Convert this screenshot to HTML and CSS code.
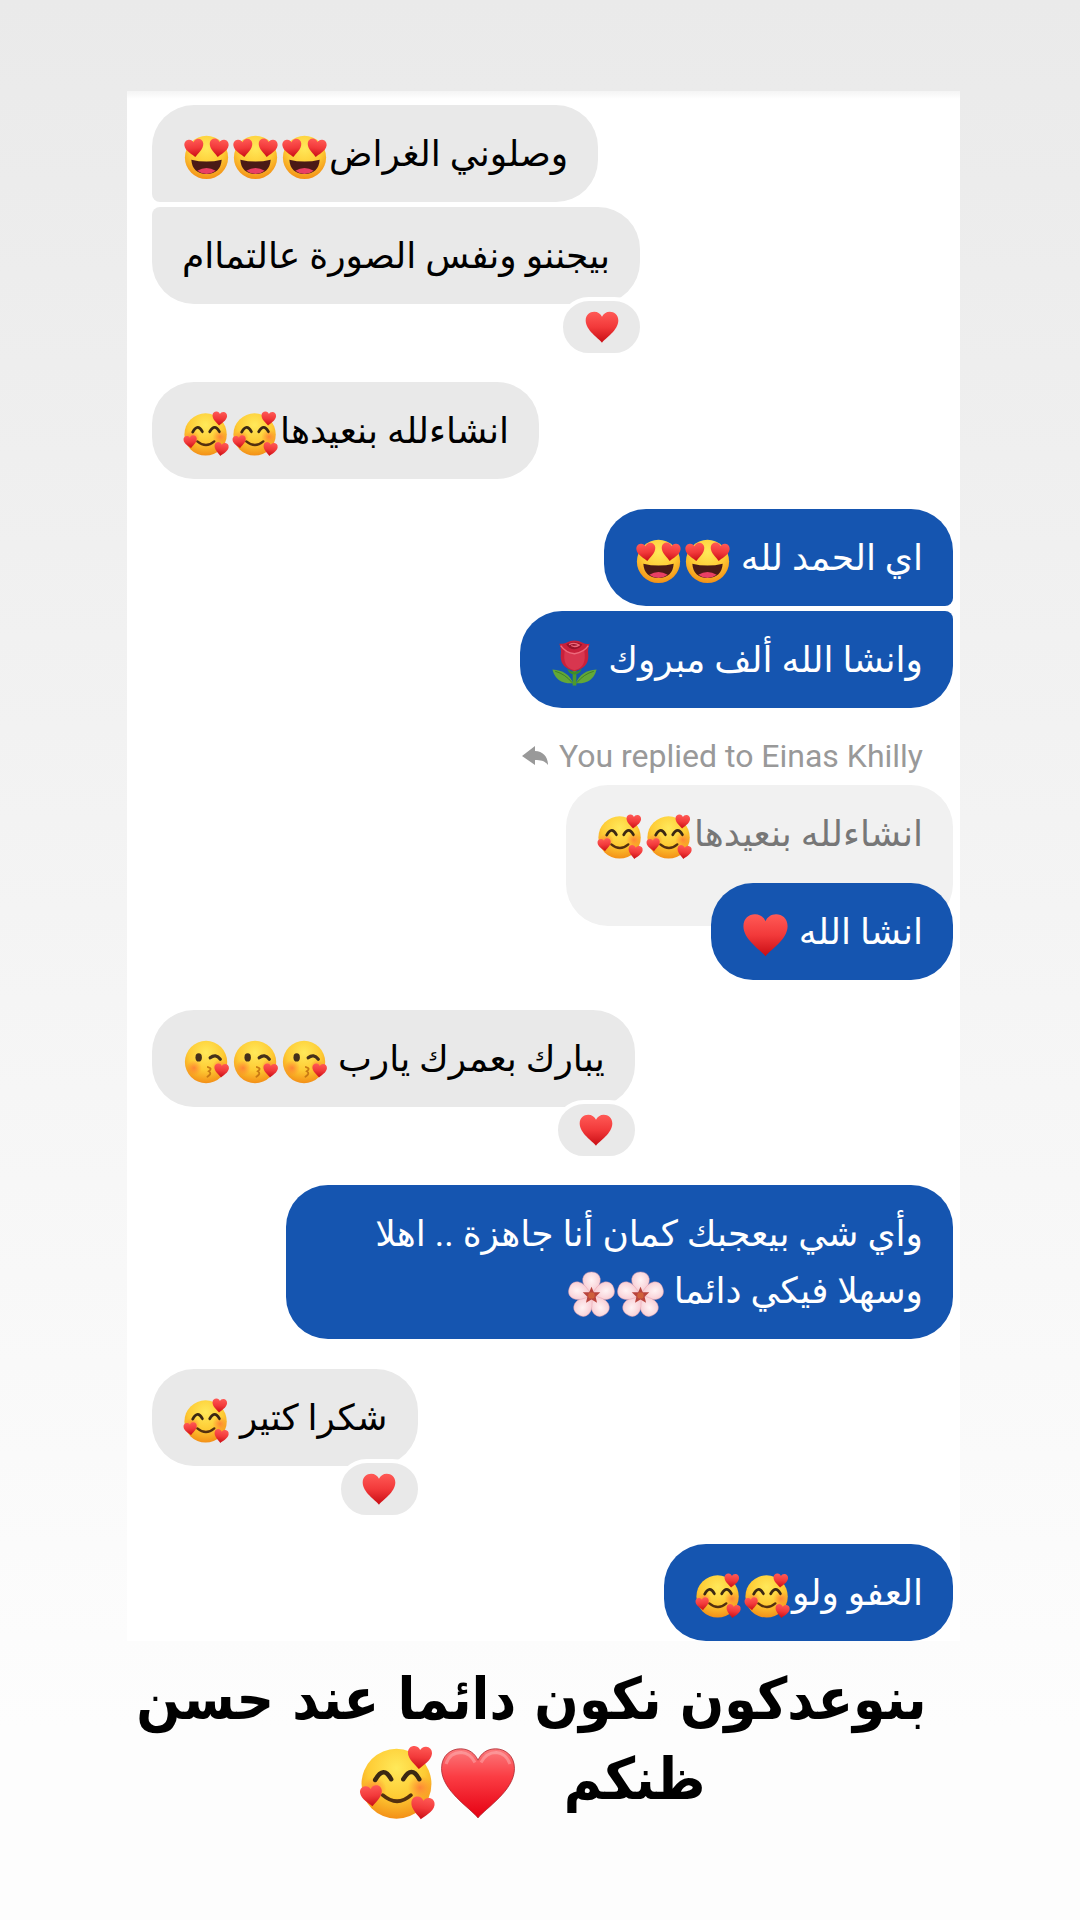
FILE: index.html
```html
<!DOCTYPE html>
<html lang="ar">
<head>
<meta charset="UTF-8">
<meta name="viewport" content="width=device-width, initial-scale=1.0">
<title>Chat story</title>
<link rel="stylesheet" href="styles.css">
</head>
<body>

<!-- shared emoji shapes -->
<svg class="defs" aria-hidden="true">
  <defs>
    <radialGradient id="face" cx="50%" cy="28%" r="75%">
      <stop offset="0" stop-color="#ffe95a"/>
      <stop offset="0.55" stop-color="#fecb34"/>
      <stop offset="1" stop-color="#f28a14"/>
    </radialGradient>
    <linearGradient id="red" x1="0" y1="0" x2="0" y2="1">
      <stop offset="0" stop-color="#ff5a56"/>
      <stop offset="0.5" stop-color="#f2393a"/>
      <stop offset="1" stop-color="#c90d14"/>
    </linearGradient>
    <linearGradient id="bigred" x1="0" y1="0" x2="0" y2="1">
      <stop offset="0" stop-color="#fb7a7c"/>
      <stop offset="0.4" stop-color="#fb3d44"/>
      <stop offset="1" stop-color="#e60012"/>
    </linearGradient>
    <radialGradient id="petal" cx="50%" cy="35%" r="65%">
      <stop offset="0" stop-color="#fff3f4"/>
      <stop offset="1" stop-color="#f6c3cb"/>
    </radialGradient>
    <radialGradient id="blush">
      <stop offset="0" stop-color="#ff6a3a" stop-opacity="0.7"/>
      <stop offset="1" stop-color="#ff7a2a" stop-opacity="0"/>
    </radialGradient>
    <path id="heartShape" d="M50 96C40 83 2 60 2 31C2 14 14 5 27 5C38 5 46 11 50 20C54 11 62 5 73 5C86 5 98 14 98 31C98 60 60 83 50 96Z"/>
    <symbol id="heart" viewBox="0 0 100 100">
      <use href="#heartShape" fill="url(#red)"/>
    </symbol>
    <symbol id="bigheart" viewBox="0 0 100 100">
      <use href="#heartShape" fill="url(#bigred)" stroke="#a8242b" stroke-width="1"/>
      <path d="M8 25Q13 10 28 10Q40 11 46 23M54 23Q61 10 74 10Q87 11 92 25" fill="none" stroke="#fff" stroke-opacity="0.25" stroke-width="4"/>
    </symbol>
    <symbol id="hearteyes" viewBox="0 0 100 100">
      <circle cx="50" cy="51" r="47" fill="url(#face)"/>
      <path d="M17 56Q50 64 83 56Q81 86 50 87Q19 86 17 56Z" fill="#4a1a16"/>
      <path d="M30 80Q50 68 70 80Q61 87 50 87Q39 87 30 80Z" fill="#e93f64"/>
      <use href="#heartShape" fill="url(#red)" transform="translate(2 9) rotate(-7 22 22) scale(.43)"/>
      <use href="#heartShape" fill="url(#red)" transform="translate(55 9) rotate(7 22 22) scale(.43)"/>
    </symbol>
    <symbol id="adore" viewBox="0 0 100 100">
      <circle cx="48" cy="51" r="46" fill="url(#face)"/>
      <circle cx="19" cy="58" r="16" fill="url(#blush)"/>
      <circle cx="79" cy="56" r="16" fill="url(#blush)"/>
      <path d="M20 46Q31 26 41 45M57 45Q68 26 78 45" fill="none" stroke="#3b2813" stroke-width="6" stroke-linecap="round"/>
      <path d="M30 66Q49 82 67 66" fill="none" stroke="#54300f" stroke-width="5" stroke-linecap="round"/>
      <use href="#heartShape" fill="url(#red)" transform="translate(62 0) rotate(4 16 16) scale(.33)"/>
      <use href="#heartShape" fill="url(#red)" transform="translate(0 52) rotate(-6 15 15) scale(.3)"/>
      <use href="#heartShape" fill="url(#red)" transform="translate(66 67) rotate(8 16 16) scale(.32)"/>
    </symbol>
    <symbol id="kiss" viewBox="0 0 100 100">
      <circle cx="49" cy="50" r="46" fill="url(#face)"/>
      <circle cx="23" cy="63" r="17" fill="url(#blush)"/>
      <circle cx="78" cy="60" r="15" fill="url(#blush)"/>
      <ellipse cx="33" cy="40" rx="7" ry="9" fill="#45301a"/>
      <path d="M58 41Q70 31 80 44" fill="none" stroke="#45301a" stroke-width="7" stroke-linecap="round"/>
      <path d="M53 61Q64 64 55 70Q63 75 52 82" fill="none" stroke="#c87a14" stroke-width="4" stroke-linecap="round"/>
      <use href="#heartShape" fill="url(#red)" transform="translate(66 52) rotate(4 17 17) scale(.33)"/>
    </symbol>
    <symbol id="rose" viewBox="0 0 100 100">
      <path d="M50 60V99" stroke="#4d9a2d" stroke-width="8"/>
      <path d="M47 94Q10 96 2 64Q36 66 47 94Z" fill="#62a838"/>
      <path d="M53 94Q90 96 98 64Q64 66 53 94Z" fill="#62a838"/>
      <path d="M8 68Q30 74 45 93M92 68Q70 74 55 93" fill="none" stroke="#3c7e24" stroke-width="2"/>
      <path d="M34 62Q50 78 66 62L62 70Q50 80 38 70Z" fill="#3e8c2a"/>
      <path d="M17 8Q26 9 32 6Q50-4 68 6Q75 10 83 8Q78 18 80 32Q82 60 50 68Q18 60 20 32Q22 18 17 8Z" fill="#c9213b"/>
      <path d="M29 22Q50 38 71 22Q78 60 50 66Q22 60 29 22Z" fill="#d8364f"/>
      <path d="M32 9Q50 0 67 10Q60 20 50 20Q38 20 32 9Z" fill="#98122a"/>
      <path d="M38 10Q50 4 60 11Q51 17 43 12M20 12Q30 27 50 30Q71 26 80 12" fill="none" stroke="#ed6a7c" stroke-width="3"/>
    </symbol>
    <symbol id="blossom" viewBox="0 0 100 100">
      <g fill="url(#petal)" stroke="#e9a3ae" stroke-width="1">
        <path id="leaf" d="M50 53Q29 32 31 17Q34 2 50 2Q66 2 69 17Q71 32 50 53Z"/>
        <use href="#leaf" transform="rotate(72 50 53)"/>
        <use href="#leaf" transform="rotate(144 50 53)"/>
        <use href="#leaf" transform="rotate(216 50 53)"/>
        <use href="#leaf" transform="rotate(288 50 53)"/>
      </g>
      <path d="M50 34L55 46L69 46L59 56L62 69L50 62L38 69L41 56L31 46L45 46Z" fill="#b9433c"/>
      <circle cx="50" cy="53" r="7" fill="#cf5f3a"/>
    </symbol>
  </defs>
</svg>

<main class="story">
  <section class="chat">
    <div class="message in tail" dir="rtl">وصلوني الغراض<svg class="emoji"><use href="#hearteyes"/></svg><svg class="emoji"><use href="#hearteyes"/></svg><svg class="emoji"><use href="#hearteyes"/></svg></div>
    <div class="message in joined reacted" dir="rtl">بيجننو ونفس الصورة عالتماام<span class="reaction"><svg><use href="#heart"/></svg></span></div>
    <div class="message in" dir="rtl">انشاءلله بنعيدها<svg class="emoji"><use href="#adore"/></svg><svg class="emoji"><use href="#adore"/></svg></div>
    <div class="message out tail" dir="rtl">اي الحمد لله <svg class="emoji"><use href="#hearteyes"/></svg><svg class="emoji"><use href="#hearteyes"/></svg></div>
    <div class="message out joined" dir="rtl">وانشا الله ألف مبروك <svg class="emoji"><use href="#rose"/></svg></div>
    <div class="replied" lang="en">
      <svg class="arrow" viewBox="0 0 27 20"><path d="M0 10L13 0V5C21 5 26 11 26 19C23 15 19 14 13 14V19Z"/></svg>
      <span>You replied to Einas Khilly</span>
    </div>
    <div class="message quote" dir="rtl">انشاءلله بنعيدها<svg class="emoji"><use href="#adore"/></svg><svg class="emoji"><use href="#adore"/></svg></div>
    <div class="message out answer" dir="rtl">انشا الله <svg class="emoji"><use href="#heart"/></svg></div>
    <div class="message in reacted" dir="rtl">يبارك بعمرك يارب <svg class="emoji"><use href="#kiss"/></svg><svg class="emoji"><use href="#kiss"/></svg><svg class="emoji"><use href="#kiss"/></svg><span class="reaction"><svg><use href="#heart"/></svg></span></div>
    <div class="message out" dir="rtl">وأي شي بيعجبك كمان أنا جاهزة .. اهلا وسهلا فيكي دائما <svg class="emoji"><use href="#blossom"/></svg><svg class="emoji"><use href="#blossom"/></svg></div>
    <div class="message in reacted" dir="rtl">شكرا كتير <svg class="emoji"><use href="#adore"/></svg><span class="reaction"><svg><use href="#heart"/></svg></span></div>
    <div class="message out" dir="rtl">العفو ولو<svg class="emoji"><use href="#adore"/></svg><svg class="emoji"><use href="#adore"/></svg></div>
  </section>
  <p class="caption" dir="rtl">بنوعدكون نكون دائما عند حسن ظنكم <span class="stickers"><svg><use href="#bigheart"/></svg><svg><use href="#adore"/></svg></span></p>
</main>

</body>
</html>
```

FILE: styles.css
```css
* {
  box-sizing: border-box;
}
body {
  margin: 0;
  min-height: 100vh;
  background: linear-gradient(#eaeaea, #fdfdfd 90%);
  font-family: Roboto, "DejaVu Sans", sans-serif;
}
.defs {
  position: absolute;
  width: 0;
  height: 0;
}
.story {
  padding: 91px 120px 0 127px;
}
.chat {
  display: flex;
  flex-direction: column;
  align-items: flex-start;
  gap: 30px;
  padding: 14px 7px 0 25px;
  background: linear-gradient(#f4f4f4, #fff 8px);
}
.message {
  position: relative;
  max-width: 667px;
  padding: 21px 30px 19px;
  border-radius: 42px;
  font-size: 36px;
  line-height: 57px;
}
.in {
  background: #e9e9e9;
  color: #000;
}
.out {
  align-self: flex-end;
  background: #1555b0;
  color: #fff;
}
.in.tail {
  border-bottom-left-radius: 8px;
}
.in.joined {
  border-top-left-radius: 8px;
}
.out.tail {
  border-bottom-right-radius: 8px;
}
.out.joined {
  border-top-right-radius: 8px;
}
.joined {
  margin-top: -25px;
}
.reacted {
  margin-bottom: 48px;
}
.emoji {
  width: 47px;
  height: 46px;
  margin: 0 1px;
  vertical-align: -14px;
}
.reaction {
  position: absolute;
  right: -4px;
  bottom: -53px;
  display: flex;
  align-items: center;
  justify-content: center;
  width: 85px;
  height: 60px;
  border: 4px solid #fff;
  border-radius: 30px;
  background: #e9e9e9;
}
.reaction svg {
  width: 34px;
  height: 34px;
}
.replied {
  display: flex;
  align-items: center;
  align-self: flex-end;
  gap: 10px;
  margin-top: -2px;
  padding-right: 30px;
  color: #999;
  font-size: 32px;
  line-height: 40px;
}
.arrow {
  width: 27px;
  height: 20px;
  fill: #999;
}
.quote {
  align-self: flex-end;
  margin-top: -21px;
  padding-bottom: 63px;
  background: #f1f1f1;
  color: #777;
}
.answer {
  margin-top: -73px;
}
.caption {
  margin: 0;
  padding: 18px 24px 0 0;
  color: #000;
  font-family: "DejaVu Sans Condensed", "DejaVu Sans", sans-serif;
  font-size: 58px;
  font-weight: bold;
  line-height: 80px;
  text-align: center;
}
.stickers {
  margin-right: 28px;
}
.stickers svg {
  width: 80px;
  height: 76px;
  vertical-align: -22px;
}
```
